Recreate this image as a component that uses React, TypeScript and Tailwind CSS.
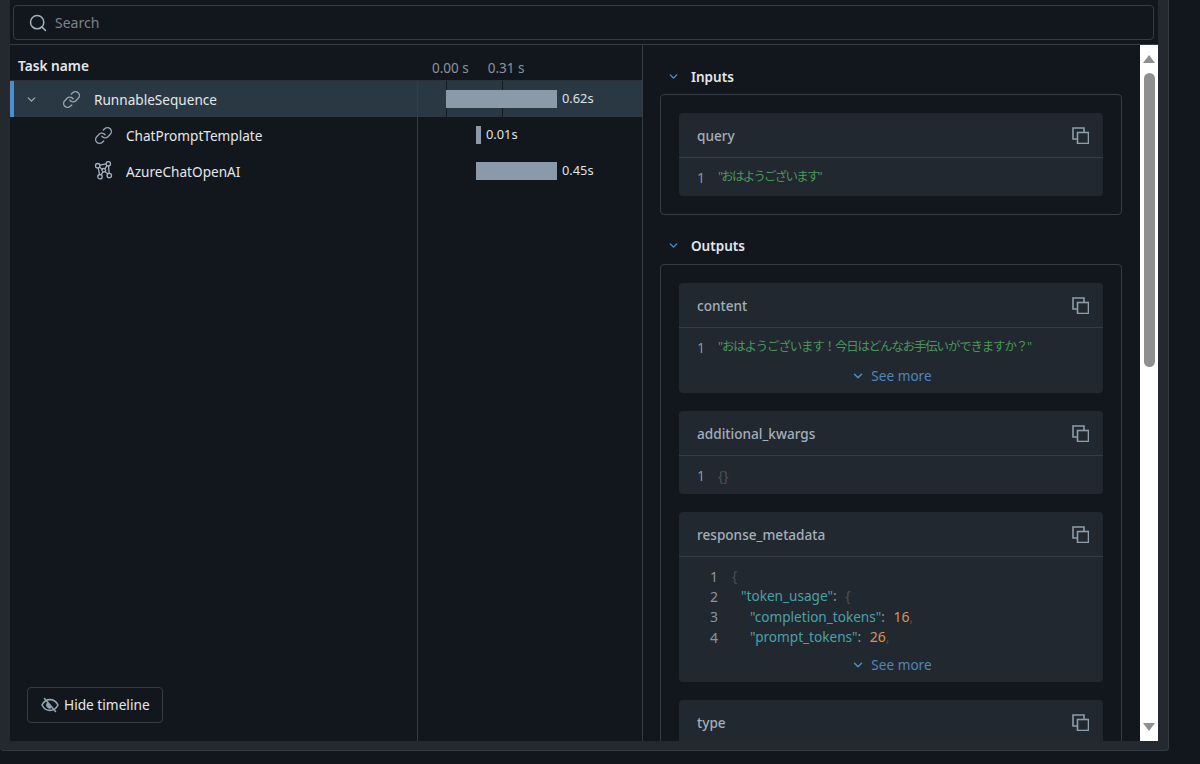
import { ChevronDown, Link, Search } from "lucide-react";

const CJK = `font-['Noto_Sans','Noto_Sans_CJK_JP',sans-serif]`;

const CopyIcon = () => (
  <svg width="17" height="17" viewBox="0 0 17 17" fill="none" stroke="#8c9dab" strokeWidth="1.6">
    <path d="M5 12H1V1h11v4" />
    <rect x="5.500" y="5.500" width="11" height="11" />
  </svg>
);

const NetworkIcon = () => (
  <svg width="20" height="20" viewBox="0 0 20 20" fill="none" stroke="#a3b1bc" strokeWidth="1.300">
    <path d="M3.700 4.700 14.300 2.300M3.700 4.700 6 15.700M14.300 2.300 6 15.700M3.700 4.700 15.300 14M14.300 2.300 15.300 14" />
    <circle cx="3.700" cy="4.700" r="2.200" fill="#12171e" />
    <circle cx="14.300" cy="2.800" r="2.200" fill="#12171e" />
    <circle cx="6" cy="15.700" r="2.200" fill="#12171e" />
    <circle cx="15.300" cy="14.500" r="2.200" fill="#12171e" />
    <circle cx="9.800" cy="9.300" r="1.800" fill="#12171e" />
  </svg>
);

const EyeOffIcon = () => (
  <svg width="18" height="18" viewBox="0 0 18 18" fill="none" stroke="#93a4b1" strokeWidth="1.600" strokeLinecap="round">
    <path d="M1 9c1.800-3.600 4.600-5.400 8-5.400S15.200 5.400 17 9c-1.800 3.600-4.600 5.400-8 5.400S2.800 12.600 1 9Z" />
    <path d="M6.500 6.500a3.300 3.300 0 0 0 4.200 5.200Z" fill="#93a4b1" stroke="none" />
    <path d="M3.500 2.500 14.500 15.500" />
  </svg>
);

const SeeMore = () => (
  <div className="flex h-[20px] items-center justify-center gap-[6px] pl-[1px] text-[13.600px] text-[#4f86b8]">
    <ChevronDown size={14} strokeWidth={2.5} className="text-[#4a90d0]" />
    <span>See more</span>
  </div>
);

const CodeCard = ({ name, children, mt = "mt-[18px]" }: any) => (
  <div className={`${mt} shrink-0 rounded-[4px] bg-[#22282f]`}>
    <div className="flex h-[45px] items-center justify-between border-b border-[#353c44] pl-[18px] pr-[14px]">
      <span className="pt-[2px] text-[13.600px] font-medium text-[#a3afb9]">{name}</span>
      <CopyIcon />
    </div>
    {children}
  </div>
);

const SectionTitle = ({ title }: any) => (
  <div className="flex h-[20px] items-center gap-[11px] pl-[24px]">
    <ChevronDown size={13} strokeWidth={2.5} className="text-[#4a90d0]" />
    <span className="pt-[2px] text-[13.500px] font-semibold text-[#e3e7ea]">{title}</span>
  </div>
);

const OneLine = ({ children }: any) => (
  <div className="flex h-[38px] items-center pl-[18px] text-[13px]">
    <span className="w-[21px] pt-[1px] text-[14px] text-[#8b949c]">1</span>
    {children}
  </div>
);

const JsonLine = ({ n, indent, children }: any) => (
  <div className="flex h-[20.300px] items-center text-[13.600px]">
    <span className="w-[53px] pl-[31px] text-[14px] text-[#8b949c]">{n}</span>
    <span className={indent}>{children}</span>
  </div>
);

const TaskRow = ({ selected, indent, icon, name, barClass, time, ticks }: any) => (
  <div className={`flex h-[36px] ${selected ? "bg-[#2a3843]" : ""}`}>
    <div className={`flex w-[408px] items-center border-r border-[#353c44] ${indent}`}>
      {icon}
      <span className="pt-[2px] text-[13.600px] text-[#e3e7ea]">{name}</span>
    </div>
    <div className="relative flex flex-1 items-center">
      {ticks && (
        <>
          <div className="absolute left-[28px] top-0 h-full w-px bg-[#141a20]" />
          <div className="absolute left-[84px] top-0 h-full w-px bg-[#141a20]" />
        </>
      )}
      <div className={`relative h-[18px] bg-[#8a9aa8] ${barClass}`} />
      <span className="relative ml-[5px] text-[12.800px] text-[#dfe3e6]">{time}</span>
    </div>
  </div>
);

export default function App() {
  return (
    <div className={`h-[764px] w-[1200px] overflow-hidden bg-[#12171e] ${CJK}`}>
      <div className="flex h-[751px] w-[1169px] flex-col rounded-b-[4px] border-b border-r border-[#353c44] bg-[#23292f] pb-[9px] pl-[10px] pr-[10px]">
        <div className="flex h-[741px] flex-col bg-[#12171e]">
          <div className="h-[45px] shrink-0 border-b border-[#353c44] pb-[4px] pl-[3px] pr-[4px] pt-[5px]">
            <div className="flex h-[35px] items-center gap-[7px] rounded-[4px] border border-[#353c44] pl-[14px]">
              <Search size={20} strokeWidth={1.800} className="text-[#a3b1bc]" />
              <span className="text-[14px] text-[#78838d]">Search</span>
            </div>
          </div>

          <div className="flex min-h-0 flex-1">
            <div className="flex w-[633px] shrink-0 flex-col border-r border-[#353c44]">
              <div className="flex h-[36px] shrink-0 items-center border-b border-[#2a3138]">
                <span className="w-[408px] pl-[8px] pt-[8px] text-[13.700px] font-semibold text-[#e3e7ea]">Task name</span>
                <span className="ml-[14px] pt-[12px] text-[13.500px] text-[#8b949c]">0.00 s</span>
                <span className="ml-[19px] pt-[12px] text-[13.500px] text-[#8b949c]">0.31 s</span>
              </div>

              <div className="relative">
                <div className="absolute left-0 top-0 h-[36px] w-[4px] bg-[#4a90d0]" />
                <TaskRow
                  selected
                  ticks
                  indent="pl-[15px]"
                  icon={
                    <>
                      <ChevronDown size={13} strokeWidth={2.200} className="mr-[24px] text-[#a3b1bc]" />
                      <Link size={19} strokeWidth={1.800} className="mr-[13px] text-[#93a4b1]" />
                    </>
                  }
                  name="RunnableSequence"
                  barClass="ml-[28px] w-[111px]"
                  time="0.62s"
                />
              </div>
              <TaskRow
                indent="pl-[84px]"
                icon={<Link size={19} strokeWidth={1.800} className="mr-[13px] text-[#93a4b1]" />}
                name="ChatPromptTemplate"
                barClass="ml-[58px] w-[5px]"
                time="0.01s"
              />
              <TaskRow
                indent="pl-[84px]"
                icon={
                  <span className="mr-[12px]">
                    <NetworkIcon />
                  </span>
                }
                name="AzureChatOpenAI"
                barClass="ml-[58px] w-[81px]"
                time="0.45s"
              />

              <div className="flex min-h-0 flex-1">
                <div className="flex w-[408px] items-end border-r border-[#353c44] pb-[18px] pl-[17px]">
                  <div className="flex h-[36px] w-[136px] items-center gap-[5px] rounded-[4px] border border-[#353c44] pl-[13px] text-[13.700px] text-[#e3e7ea]">
                    <EyeOffIcon />
                    <span>Hide timeline</span>
                  </div>
                </div>
              </div>
            </div>

            <div className="flex min-w-0 flex-1 flex-col overflow-hidden pl-[17px] pr-[18px] pt-[21px]">
              <div className="-ml-[17px]">
                <SectionTitle title="Inputs" />
              </div>
              <div className="mt-[8px] shrink-0 rounded-[4px] border border-[#353c44] px-[18px] pb-[18px]">
                <CodeCard name="query">
                  <OneLine>
                    <span className="pt-[1px] text-[12.500px] tracking-[-1.800px] text-[#4a965a]">"おはようございます"</span>
                  </OneLine>
                </CodeCard>
              </div>

              <div className="-ml-[17px] mt-[20px]">
                <SectionTitle title="Outputs" />
              </div>
              <div className="mt-[9px] shrink-0 rounded-[4px] border border-[#353c44] px-[18px]">
                <CodeCard name="content">
                  <OneLine>
                    <span className="pt-[1px] text-[12.500px] tracking-[-1.200px] text-[#4a965a]">"おはようございます！今日はどんなお手伝いができますか？"</span>
                  </OneLine>
                  <SeeMore />
                  <div className="h-[7px]" />
                </CodeCard>
                <CodeCard name="additional_kwargs">
                  <OneLine>
                    <span className="text-[14px] text-[#4a5058]">{"{}"}</span>
                  </OneLine>
                </CodeCard>
                <CodeCard name="response_metadata">
                  <div className="pt-[9px]">
                    <JsonLine n="1" indent="">
                      <span className="text-[#4a5058]">{"{"}</span>
                    </JsonLine>
                    <JsonLine n="2" indent="pl-[9px]">
                      <span className="text-[#4aa0a8]">"token_usage"</span>
                      <span className="text-[#8b949c]">: </span>
                      <span className="ml-[5px] text-[#4a5058]">{"{"}</span>
                    </JsonLine>
                    <JsonLine n="3" indent="pl-[18px]">
                      <span className="text-[#4aa0a8]">"completion_tokens"</span>
                      <span className="text-[#8b949c]">: </span>
                      <span className="ml-[5px] text-[14px] text-[#d9935a]">16</span>
                      <span className="text-[#4a5058]">,</span>
                    </JsonLine>
                    <JsonLine n="4" indent="pl-[18px]">
                      <span className="text-[#4aa0a8]">"prompt_tokens"</span>
                      <span className="text-[#8b949c]">: </span>
                      <span className="ml-[5px] text-[14px] text-[#d9935a]">26</span>
                      <span className="text-[#4a5058]">,</span>
                    </JsonLine>
                  </div>
                  <div className="pb-[7px] pt-[8px]">
                    <SeeMore />
                  </div>
                </CodeCard>
                <CodeCard name="type" />
              </div>
            </div>

            <div className="flex w-[18px] shrink-0 flex-col items-center bg-white">
              <div className="mt-[10px] h-0 w-0 border-x-[6px] border-b-[8px] border-x-transparent border-b-[#8f8f8f]" />
              <div className="mt-[10px] h-[294px] w-[11px] rounded-full bg-[#8f8f8f]" />
              <div className="mb-[10px] mt-auto h-0 w-0 border-x-[6px] border-t-[8px] border-x-transparent border-t-[#8f8f8f]" />
            </div>
          </div>
        </div>
      </div>
    </div>
  );
}
